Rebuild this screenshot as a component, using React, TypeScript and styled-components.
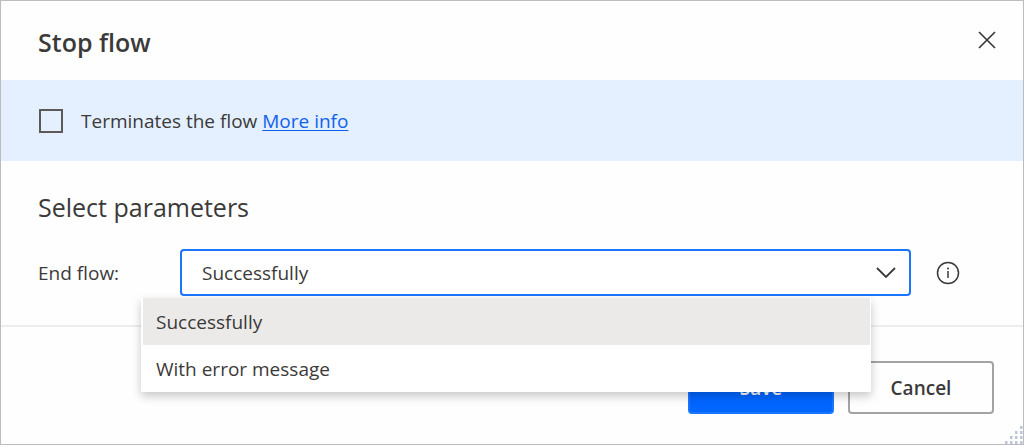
import React, { useState } from "react";
import styled, { createGlobalStyle, css } from "styled-components";

const GlobalStyle = createGlobalStyle`
  *, *::before, *::after { box-sizing: border-box; }
  body {
    margin: 0;
    background: #fefefe;
    color: #3b3a39;
    font-family: "Segoe UI", "Open Sans", sans-serif;
    font-size: 19px;
    line-height: 24px;
  }
`;

const Dialog = styled.section`
  position: relative;
  display: flex;
  flex-direction: column;
  min-height: 100vh;
  border: 1px solid #bcbcbc;
  background: #fefefe;
`;

const Header = styled.header`
  display: flex;
  align-items: center;
  justify-content: space-between;
  padding: 25px 24px 22px 37px;
`;

const Title = styled.h1`
  margin: 0;
  font-size: 25px;
  line-height: 32px;
  font-weight: 600;
`;

const IconButton = styled.button`
  display: flex;
  padding: 0;
  border: 0;
  background: none;
  color: #3b3a39;
  cursor: pointer;
`;

const Banner = styled.div`
  display: flex;
  align-items: center;
  gap: 18px;
  padding: 29px 38px 28px;
  background: #e4efff;
`;

const Checkbox = styled.input`
  appearance: none;
  flex: none;
  width: 24px;
  height: 24px;
  margin: 0;
  border: 2px solid #5c5a58;
  background: transparent;
  &:checked {
    background: #0066ff;
  }
`;

const Link = styled.a`
  color: #0f62ec;
  text-decoration: underline;
  text-decoration-thickness: 1px;
  text-underline-offset: 2px;
`;

const Parameters = styled.div`
  padding: 30px 63px 29px 37px;
  border-bottom: 2px solid #ededed;
`;

const SectionTitle = styled.h2`
  margin: 0 0 26px;
  font-size: 25px;
  line-height: 32px;
  font-weight: 400;
`;

const Field = styled.div`
  display: flex;
  align-items: center;
`;

const Label = styled.label`
  flex: none;
  width: 142px;
`;

const SelectBox = styled.div`
  position: relative;
  flex: 1;
  display: flex;
  margin-right: 25px;
`;

const Select = styled.select`
  appearance: none;
  width: 100%;
  height: 47px;
  padding: 0 48px 0 20px;
  border: 2px solid #1a75ff;
  border-radius: 4px;
  outline: none;
  background: #ffffff;
  color: inherit;
  font: inherit;
`;

const Chevron = styled.svg`
  position: absolute;
  top: 18px;
  right: 15px;
  pointer-events: none;
`;

const Menu = styled.ul`
  position: absolute;
  z-index: 1;
  top: 49px;
  left: -39px;
  right: 40px;
  margin: 0;
  padding: 0 1px 0 2px;
  list-style: none;
  background: #ffffff;
  box-shadow: 0 4px 9px rgba(0, 0, 0, 0.22);
`;

const Option = styled.li<{ $active: boolean }>`
  padding: 12px 13px 11px;
  cursor: default;
  ${({ $active }) => $active && css`background: #ebeae9;`}
`;

const Footer = styled.footer`
  display: flex;
  justify-content: flex-end;
  gap: 14px;
  padding: 34px 29px 30px;
`;

const Button = styled.button<{ $primary?: boolean }>`
  width: 146px;
  height: 53px;
  padding: 0;
  border: 2px solid ${({ $primary }) => ($primary ? "#1a75ff" : "#a3a3a3")};
  border-radius: 4px;
  background: ${({ $primary }) => ($primary ? "#0066ff" : "#fefefe")};
  color: ${({ $primary }) => ($primary ? "#ffffff" : "#3b3a39")};
  font: inherit;
  font-weight: 600;
`;

const Grip = styled.svg`
  position: absolute;
  right: 0;
  bottom: 0;
`;

const outcomes = ["Successfully", "With error message"];

const gripDots = [
  [15, 1],
  [10, 6], [15, 6],
  [5, 11], [10, 11], [15, 11],
  [0, 16], [5, 16], [10, 16], [15, 16],
];

export default function App() {
  const [outcome, setOutcome] = useState(outcomes[0]);

  return (
    <>
      <GlobalStyle />
      <Dialog role="dialog" aria-labelledby="dialog-title">
        <Header>
          <Title id="dialog-title">Stop flow</Title>
          <IconButton aria-label="Close">
            <svg width="24" height="24" viewBox="0 0 24 24" fill="none" stroke="currentColor" strokeWidth="1.7">
              <path d="M4 2L20 18M20 2L4 18" />
            </svg>
          </IconButton>
        </Header>

        <Banner>
          <Checkbox type="checkbox" id="terminates" />
          <span>
            <label htmlFor="terminates">Terminates the flow</label> <Link href="#info">More info</Link>
          </span>
        </Banner>

        <Parameters>
          <SectionTitle>Select parameters</SectionTitle>
          <Field>
            <Label htmlFor="end-flow">End flow:</Label>
            <SelectBox>
              <Select id="end-flow" value={outcome} onChange={(e) => setOutcome(e.target.value)}>
                {outcomes.map((name) => (
                  <option key={name}>{name}</option>
                ))}
              </Select>
              <Chevron width="20" height="12" viewBox="0 0 20 12" fill="none" stroke="#3b3a39" strokeWidth="1.8">
                <path d="M1 1L10 10L19 1" />
              </Chevron>
              <Menu role="listbox" aria-label="End flow">
                {outcomes.map((name) => (
                  <Option
                    key={name}
                    role="option"
                    aria-selected={name === outcome}
                    $active={name === outcome}
                    onClick={() => setOutcome(name)}
                  >
                    {name}
                  </Option>
                ))}
              </Menu>
            </SelectBox>
            <IconButton aria-label="About End flow">
              <svg width="24" height="24" viewBox="0 0 24 24" fill="none" stroke="currentColor">
                <circle cx="12" cy="12" r="10.5" strokeWidth="1.5" />
                <path d="M12 10V17" strokeWidth="1.5" />
                <circle cx="12" cy="7.5" r="1" fill="currentColor" stroke="none" />
              </svg>
            </IconButton>
          </Field>
        </Parameters>

        <Footer>
          <Button $primary>Save</Button>
          <Button>Cancel</Button>
        </Footer>

        <Grip width="18" height="19" viewBox="0 0 18 19" fill="#bcc4d8" aria-hidden="true">
          {gripDots.map(([x, y]) => (
            <rect key={`${x}-${y}`} x={x} y={y} width="2.5" height="3" />
          ))}
        </Grip>
      </Dialog>
    </>
  );
}
